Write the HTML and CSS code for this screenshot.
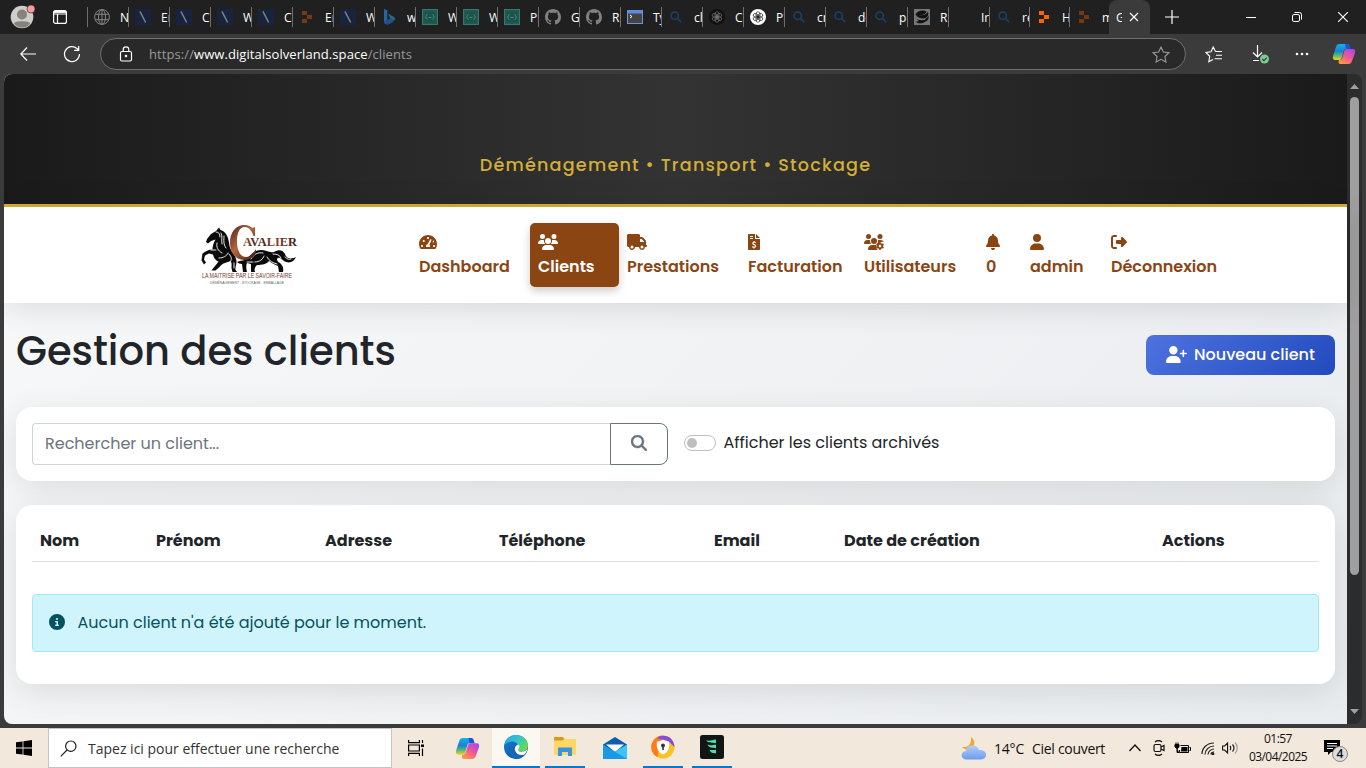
FILE: index.html
```html
<!DOCTYPE html>
<html lang="fr">
<head>
<meta charset="utf-8">
<title>Gestion des clients</title>
<link rel="stylesheet" href="styles.css">
</head>
<body>
<svg class="defs" width="0" height="0">
  <defs>
    <linearGradient id="cpA" x1="0" y1="0" x2="0" y2="1"><stop offset="0" stop-color="#18aef0"/><stop offset=".45" stop-color="#1684d4"/><stop offset=".72" stop-color="#58b878"/><stop offset="1" stop-color="#f5d21c"/></linearGradient>
    <linearGradient id="cpB" x1=".8" y1="0" x2=".2" y2="1"><stop offset="0" stop-color="#a848ef"/><stop offset=".5" stop-color="#ef5795"/><stop offset="1" stop-color="#ff9a48"/></linearGradient>
    <linearGradient id="edA" x1="0" y1="0" x2="1" y2=".5"><stop offset="0" stop-color="#25a7e2"/><stop offset=".55" stop-color="#30c5cf"/><stop offset="1" stop-color="#62d957"/></linearGradient>
    <linearGradient id="edB" x1="0" y1="0" x2="1" y2="1"><stop offset="0" stop-color="#1681d8"/><stop offset="1" stop-color="#0b4c94"/></linearGradient>
    <linearGradient id="cloudG" x1="0" y1="0" x2="0" y2="1"><stop offset="0" stop-color="#b5d0fc"/><stop offset="1" stop-color="#6c9bec"/></linearGradient>
    <linearGradient id="copper" x1="0" y1="0" x2="1" y2="1"><stop offset="0" stop-color="#4b2218"/><stop offset=".45" stop-color="#b4663f"/><stop offset="1" stop-color="#3b1a14"/></linearGradient>
    <linearGradient id="letters" x1="0" y1="0" x2="1" y2="0"><stop offset="0" stop-color="#9a5236"/><stop offset=".3" stop-color="#33150f"/><stop offset=".55" stop-color="#8d4a32"/><stop offset="1" stop-color="#33150f"/></linearGradient>
  </defs>
  <symbol id="t-slash" viewBox="0 0 16 16"><rect width="16" height="16" fill="#18233e"/><path d="M5.200 2.800 10.400 13" stroke="#7d7f83" stroke-width="1.500" stroke-linecap="round"/></symbol>
  <symbol id="t-globe" viewBox="0 0 16 16"><g fill="none" stroke="#858585" stroke-width="1"><circle cx="8" cy="8" r="7.400"/><ellipse cx="8" cy="8" rx="3.500" ry="7.400"/><path d="M1.400 5.300h13.200M1.400 10.700h13.200M8 .6v14.800"/></g></symbol>
  <symbol id="t-hub" viewBox="0 0 16 16"><path d="M3 2h5v4H3zM8 6h5v4H8zM3 10h5v4H3z" fill="currentColor"/></symbol>
  <symbol id="t-bing" viewBox="0 0 16 16"><path d="M3 0l3.300 1.300v9.400L3 13.200z" fill="#2863a8"/><path d="M3 12.800 10 9l3.500 1.700-2 2.900L6.300 16 3 14z" fill="#244f8b"/><path d="M7 4.500 13 8c1 .7 1.300 2 .5 3.600L9.200 9.300z" fill="#226e83"/></symbol>
  <symbol id="t-code" viewBox="0 0 16 16"><rect x=".5" y=".5" width="15" height="15" fill="#1f5d54" stroke="#38766d"/><rect x="2.500" y="2.500" width="11" height="11" fill="#1c534b"/><path d="M5.500 5.500c-1.500 0-.5 2-2 2.500 1.500.5.5 2.500 2 2.500M10.500 5.500c1.500 0 .5 2 2 2.500-1.500.5-.5 2.500-2 2.500M6.500 8.500h3" fill="none" stroke="#5d9187" stroke-width=".9"/></symbol>
  <symbol id="t-git" viewBox="0 0 16 16"><path fill="#808080" d="M8 0C3.580 0 0 3.580 0 8c0 3.540 2.290 6.530 5.470 7.590.4.070.55-.17.55-.38 0-.19-.01-.82-.01-1.490-2.010.37-2.530-.49-2.690-.94-.09-.23-.48-.94-.82-1.130-.28-.15-.68-.52-.01-.53.63-.01 1.080.58 1.230.82.72 1.210 1.870.87 2.330.66.070-.52.28-.87.51-1.070-1.780-.2-3.640-.89-3.640-3.950 0-.87.31-1.590.82-2.150-.08-.2-.36-1.020.08-2.120 0 0 .67-.21 2.200.82.64-.18 1.320-.27 2-.27s1.360.09 2 .27c1.530-1.040 2.200-.82 2.200-.82.44 1.100.16 1.920.08 2.120.51.56.82 1.270.82 2.150 0 3.070-1.870 3.750-3.650 3.950.29.25.54.73.54 1.480 0 1.070-.01 1.930-.01 2.200 0 .21.15.46.55.38A8.010 8.010 0 0 0 16 8c0-4.420-3.580-8-8-8z"/></symbol>
  <symbol id="t-term" viewBox="0 0 16 16"><rect x=".5" y="1.500" width="15" height="13" fill="#444" stroke="#6e94d2"/><path d="M.5 1.500h15v3H.5z" fill="#5d8be0"/><path d="m3 6 2 1.500L3 9" fill="none" stroke="#fff"/></symbol>
  <symbol id="t-find" viewBox="0 0 16 16"><circle cx="6.700" cy="6.700" r="3.700" fill="none" stroke="#17446b" stroke-width="1.500"/><path d="m9.500 9.500 3.600 3.600" stroke="#17446b" stroke-width="1.600"/></symbol>
  <symbol id="knot" viewBox="0 0 16 16"><g fill="none" stroke="currentColor" stroke-width=".7"><ellipse cx="8" cy="5.600" rx="2" ry="2.900"/><ellipse cx="8" cy="5.600" rx="2" ry="2.900" transform="rotate(60 8 8)"/><ellipse cx="8" cy="5.600" rx="2" ry="2.900" transform="rotate(120 8 8)"/><ellipse cx="8" cy="5.600" rx="2" ry="2.900" transform="rotate(180 8 8)"/><ellipse cx="8" cy="5.600" rx="2" ry="2.900" transform="rotate(240 8 8)"/><ellipse cx="8" cy="5.600" rx="2" ry="2.900" transform="rotate(300 8 8)"/></g></symbol>
  <symbol id="t-gptd" viewBox="0 0 16 16"><circle cx="8" cy="8" r="8" fill="#111"/><use href="#knot" color="#777"/></symbol>
  <symbol id="t-gpt" viewBox="0 0 16 16"><circle cx="8" cy="8" r="8" fill="#fff"/><use href="#knot" color="#222"/></symbol>
  <symbol id="t-bird" viewBox="0 0 16 16"><rect width="16" height="16" fill="#777"/><path d="M2 4.500C5 .5 10 1 12.500 2.500 12 5 9 6.500 5.500 6c3 1 6.500-.5 8.500-3 1 3-.5 6-4.500 6.500C6 9.500 3 8 1.500 5.500zM1 8.500c2 2.500 6 3.500 12 2-2 3.500-6 4.500-9.500 3.500L2 12.500l3-.3zM11 10c2-1 3-2 3.500-3.500.5 3-.5 5-2.500 6z" fill="#111"/></symbol>
  <symbol id="copilot" viewBox="0 0 24 24"><path d="M7.500 2h8c1.700 0 2 1.500 1.500 3L14 7c-1.500 0-2 1-2.500 3l-1.800 6c-.5 1.500-1.400 2-3 2H3C1 18 .5 16 1 14L4 5c.6-2 1.500-3 3.500-3z" fill="url(#cpA)"/><path d="M13 2h2.500C18 2 18 5 19 7h-5z" fill="#1a55d8"/><path d="M16.500 22h-8C7 22 6 21 7 18c2.500 0 3-1 3.500-3l1.800-6C12.800 7.500 14 7 15 7h6c2 0 2.500 2 2 4l-3 8c-.6 2-1.500 3-3.500 3z" fill="url(#cpB)"/></symbol>
</svg>

<div class="window">
  <div class="tabstrip">
    <svg class="avatar" width="26" height="26" viewBox="0 0 26 26"><circle cx="12" cy="13" r="11.300" fill="#d0cec9"/><circle cx="12" cy="10.500" r="5" fill="#86827e"/><path d="M4 19.500c0-3 16-3 16 0-3 5.500-13 5.500-16 0z" fill="#86827e"/><circle cx="21" cy="5" r="4" fill="#ff9c99" stroke="#202020" stroke-width=".6"/></svg>
    <svg class="workspace" width="16" height="16" viewBox="0 0 16 16" fill="none" stroke="#fff" stroke-width="1.200"><rect x="1.600" y="1.600" width="12.800" height="12.800" rx="2"/><path d="M1.600 3h12.800M1.600 5h12.800M5.500 5v9"/><path d="M2 2.800h12" stroke-width="2"/></svg>
    <div class="tabs">
      <div class="tab"><svg><use href="#t-globe"/></svg><span>N</span></div>
      <div class="tab"><svg><use href="#t-slash"/></svg><span>En</span></div>
      <div class="tab"><svg><use href="#t-slash"/></svg><span>C</span></div>
      <div class="tab"><svg><use href="#t-slash"/></svg><span>W</span></div>
      <div class="tab"><svg><use href="#t-slash"/></svg><span>C</span></div>
      <div class="tab dim"><svg><use href="#t-hub"/></svg><span>En</span></div>
      <div class="tab"><svg><use href="#t-slash"/></svg><span>W</span></div>
      <div class="tab"><svg><use href="#t-bing"/></svg><span>w</span></div>
      <div class="tab"><svg><use href="#t-code"/></svg><span>W</span></div>
      <div class="tab"><svg><use href="#t-code"/></svg><span>W</span></div>
      <div class="tab"><svg><use href="#t-code"/></svg><span>Pl</span></div>
      <div class="tab"><svg><use href="#t-git"/></svg><span>G</span></div>
      <div class="tab"><svg><use href="#t-git"/></svg><span>R</span></div>
      <div class="tab"><svg><use href="#t-term"/></svg><span>Ty</span></div>
      <div class="tab"><svg><use href="#t-find"/></svg><span>cl</span></div>
      <div class="tab"><svg><use href="#t-gptd"/></svg><span>C</span></div>
      <div class="tab"><svg><use href="#t-gpt"/></svg><span>Pl</span></div>
      <div class="tab"><svg><use href="#t-find"/></svg><span>cr</span></div>
      <div class="tab"><svg><use href="#t-find"/></svg><span>de</span></div>
      <div class="tab"><svg><use href="#t-find"/></svg><span>p</span></div>
      <div class="tab"><svg><use href="#t-bird"/></svg><span>R</span></div>
      <div class="tab"><svg></svg><span>Ir</span></div>
      <div class="tab"><svg><use href="#t-find"/></svg><span>re</span></div>
      <div class="tab hot"><svg><use href="#t-hub"/></svg><span>H</span></div>
      <div class="tab dim"><svg><use href="#t-hub"/></svg><span>m</span></div>
    </div>
    <div class="tab-active"><span>G</span><svg width="10" height="10" viewBox="0 0 10 10"><path d="m1 1 8 8M9 1 1 9" stroke="#fff" stroke-width="1.200"/></svg></div>
    <svg class="newtab" width="14" height="14" viewBox="0 0 14 14"><path d="M7 0v14M0 7h14" stroke="#fff" stroke-width="1.200"/></svg>
    <div class="winbtns">
      <svg width="10" height="10" viewBox="0 0 10 10"><path d="M0 5.500h10" stroke="#fff"/></svg>
      <svg width="10" height="10" viewBox="0 0 10 10" fill="none" stroke="#fff"><rect x=".5" y="2.500" width="7" height="7" rx="1.500"/><path d="M2.500.5h5a2 2 0 0 1 2 2v5"/></svg>
      <svg width="10" height="10" viewBox="0 0 10 10"><path d="m0 0 10 10M10 0 0 10" stroke="#fff" stroke-width="1.100"/></svg>
    </div>
  </div>

  <div class="toolbar">
    <svg class="back" width="16" height="14" viewBox="0 0 16 14" fill="none" stroke="#fff" stroke-width="1.200"><path d="M16 7H1M7 .5.8 7 7 13.500"/></svg>
    <svg class="reload" width="18" height="18" viewBox="0 0 18 18" fill="none" stroke="#fff" stroke-width="1.200"><path d="M16.500 9A7.500 7.500 0 1 1 14 3.500L15.500 5M15.700 1v4.300h-4.500"/></svg>
    <div class="address">
      <svg width="14" height="16" viewBox="0 0 14 16" fill="none" stroke="#fff" stroke-width="1.200"><rect x="1.500" y="5.500" width="11" height="9.500" rx="1.500"/><path d="M4.200 5.500V3.700a2.800 2.800 0 0 1 5.600 0v1.800"/><circle cx="7" cy="10" r=".7" fill="#fff"/></svg>
      <span class="url">https://<b>www.digitalsolverland.space</b>/clients</span>
      <svg class="star" width="18" height="17" viewBox="0 0 18 17" fill="none" stroke="#999" stroke-width="1.100"><path d="m9 1 2.400 5 5.500.7-4 3.800 1 5.500L9 13.300 4.100 16l1-5.500-4-3.800L6.600 6z"/></svg>
    </div>
    <svg class="favs" width="18" height="17" viewBox="0 0 18 17" fill="none" stroke="#fff" stroke-width="1.100"><path d="M10.500 5.500 8.200 1 6 5.800l-5 .7 3.700 3.800-.9 5.500L8 13.600M10.500 5.500H17M11 9.200h6M9.500 12.800H17"/></svg>
    <svg class="down" width="20" height="20" viewBox="0 0 20 20" fill="none" stroke="#fff" stroke-width="1.200"><path d="M6.500 1v12M2 8.500 6.500 13 11 8.500M2 16.500h6"/><circle cx="13.500" cy="15" r="4.500" fill="#7ccb93" stroke="none"/><path d="m11.300 15 1.600 1.600 3-3" stroke="#27472f"/></svg>
    <svg class="dots" width="14" height="4" viewBox="0 0 14 4" fill="#fff"><circle cx="2" cy="2" r="1.300"/><circle cx="7" cy="2" r="1.300"/><circle cx="12" cy="2" r="1.300"/></svg>
    <svg class="cop" width="24" height="24"><use href="#copilot"/></svg>
  </div>

  <div class="viewport">
    <div class="page">
      <header class="hero"><p class="slogan">Déménagement • Transport • Stockage</p></header>
      <nav class="navbar">
        <svg class="brand" width="100" height="64" viewBox="0 0 100 64">
          <g fill="#0b0a0a">
            <path d="M18 4.500 19.500 7c4 1 7 5 8 10 .8 4 1 8 3 11 3 4 5 7 5 11 0 3-1.500 5-1 8l1.500 2h-4.500l-1-4c0-3 .5-5-1-7-5 2-8 2-11 6l-4 3.500h-4c2-3 5-6 7-9-3-1-5-4-5.500-7l-4-1-4 2-1 4 2 3-2 2-2.500-4 1-7c3-2 6-4 10-4 0-3 1-7 3-10l-4.500 1.500-3 2.500-2-1.500 1-3 4-5 5-3z"/>
            <path d="M36 39c4-2 7-1 10-3 4-5 8-9 14-9 5 0 8 3 13 2 5-3 9-2 11 2 1 4 5 6 11 3-2 5-7 7-12 4-3-2-4-4-6-3s-1 3 2 5c2 2 4 4 3 9h-4l-1-6c-4-2-7-3-9-5-2 3-7 4-12 4-2 2-3 4-2 7h-4v-8l-4-1c-1 2-1 5 0 9h-4l-1-8c-2 0-4-1-5-2z"/>
          </g>
          <g fill="none" stroke="#fff" stroke-width=".9" stroke-linecap="round"><path d="M15 9c3 0 4 2 4 5M20 10c2 3 0 7 1 11M23 13c0 4-1 8 2 12M16 20c-1 4 1 8 5 10M18 35c4 0 8-2 9-5M28 31c3 3 3 6 1 8M10 27h5M33 40v5M50 36c3-5 7-7 12-6M54 39c5 0 8-3 9-6M66 34c2 4 6 6 10 7M72 31c4 0 7 1 8 4M84 34c2 2 4 3 6 2M46 39h6"/></g>
          <path d="M54 4v9h-1.500C51 8 48 4 44 4c-6 0-8 7-8 14 0 9 3 16 9 16 4 0 7-3 10-8v4c-2 4-6 7-12 7-8 0-14-7-14-17C29 9 35 2 43.500 2c4 0 6 1.500 8 3z" fill="url(#copper)"/>
          <text class="brand-name" x="42" y="22.500" textLength="54" lengthAdjust="spacingAndGlyphs">AVALIER</text>
          <text class="brand-tag" x="1" y="54.500" textLength="90" lengthAdjust="spacingAndGlyphs">LA MAITRISE PAR LE SAVOIR-FAIRE</text>
          <text class="brand-sub" x="9" y="61" textLength="74" lengthAdjust="spacingAndGlyphs">DÉMÉNAGEMENT . STOCKAGE . EMBALLAGE</text>
        </svg>
        <div class="menu">
          <a class="item"><svg width="18" height="16" viewBox="0 0 576 512"><path fill="currentColor" fill-rule="evenodd" d="M288 32C129 32 0 161 0 320c0 53 14 102 39 145 6 9 16 15 27 15h444c11 0 21-6 27-15 25-43 39-92 39-145C576 161 447 32 288 32zM288 96a34 34 0 1 1 0 68 34 34 0 1 1 0-68zM96 350a34 34 0 1 1 0 68 34 34 0 1 1 0-68zM152 190a34 34 0 1 1 0 68 34 34 0 1 1 0-68zM480 350a34 34 0 1 1 0 68 34 34 0 1 1 0-68zM352 416H224c-5-36 11-75 54-94l76-142c16-26 54-6 42 22l-62 136c18 22 25 50 18 78zM447 205a32 32 0 1 1-15 60l18-42z"/></svg><span>Dashboard</span></a>
          <a class="item active"><svg width="20" height="16" viewBox="0 0 640 512"><path fill="currentColor" d="M144 0a80 80 0 1 1 0 160A80 80 0 1 1 144 0zM512 0a80 80 0 1 1 0 160A80 80 0 1 1 512 0zM0 298.700C0 239.800 47.800 192 106.700 192h42.700c15.900 0 31 3.500 44.600 9.700c-1.300 7.200-1.900 14.700-1.900 22.300c0 38.200 16.800 72.500 43.300 96H21.300C9.600 320 0 310.400 0 298.700zM405.300 320c26.600-23.500 43.300-57.800 43.300-96c0-7.600-.7-15-1.900-22.300c13.600-6.300 28.700-9.700 44.600-9.700h42.700C592.200 192 640 239.800 640 298.700c0 11.800-9.600 21.300-21.300 21.300zM224 224a96 96 0 1 1 192 0 96 96 0 1 1-192 0zM128 485.300C128 411.700 187.700 352 261.300 352H378.700C452.300 352 512 411.700 512 485.300c0 14.700-11.900 26.700-26.700 26.700H154.700c-14.700 0-26.700-11.900-26.700-26.700z"/></svg><span>Clients</span></a>
          <a class="item"><svg width="20" height="16" viewBox="0 0 640 512"><path fill="currentColor" d="M48 0C21.500 0 0 21.500 0 48V368c0 26.500 21.500 48 48 48H64c0 53 43 96 96 96s96-43 96-96H384c0 53 43 96 96 96s96-43 96-96h32c17.700 0 32-14.300 32-32s-14.300-32-32-32V237.300c0-17-6.700-33.300-18.700-45.300L512 114.700c-12-12-28.300-18.700-45.300-18.700H416V48c0-26.500-21.500-48-48-48H48zM416 160h50.700L544 237.300V256H416V160zM112 416a48 48 0 1 1 96 0 48 48 0 1 1-96 0zm368-48a48 48 0 1 1 0 96 48 48 0 1 1 0-96z"/></svg><span>Prestations</span></a>
          <a class="item"><svg width="12" height="16" viewBox="0 0 384 512"><path fill="currentColor" fill-rule="evenodd" d="M32 0C14 0 0 14 0 32v448c0 18 14 32 32 32h320c18 0 32-14 32-32V160H256c-18 0-32-14-32-32V0zM256 0v128h128zM64 64h96v32H64zM64 128h96v32H64zM176 224h32v25c18 1 34 5 48 10l-9 31c-25-8-72-16-72 8 0 36 88 16 88 82 0 30-20 50-55 57v27h-32v-27c-20-3-37-9-52-16l12-31c24 11 91 26 92-7 1-39-89-19-89-83 0-28 18-46 37-50z"/></svg><span>Facturation</span></a>
          <a class="item"><svg width="20" height="16" viewBox="0 0 640 512" fill="currentColor"><circle cx="144" cy="80" r="80"/><circle cx="512" cy="80" r="80"/><path d="M0 299c0-59 48-107 107-107h42c16 0 31 4 45 10-8 45 7 88 41 118H21c-12 0-21-10-21-21zM405 320c38-28 52-76 41-118 14-6 29-10 45-10h43c44 0 82 27 98 65-26-13-54-18-70 2-39-12-68 8-82 61z"/><circle cx="320" cy="224" r="96"/><path d="M128 485c0-73 60-133 133-133h131c-7 30 3 44 16 56-17 37 0 70 31 104H155c-15 0-27-12-27-27z"/><path fill-rule="evenodd" d="m480 268 20-8h24l20 8 9 32 26 14 32-8 24 38-22 28v28l22 28-24 38-32-8-26 14-9 32h-64l-9-32-26-14-32 8-24-38 22-28v-28l-22-28 24-38 32 8 26-14zM512 344a42 42 0 1 0 0 84 42 42 0 1 0 0-84z"/></svg><span>Utilisateurs</span></a>
          <a class="item"><svg width="14" height="16" viewBox="0 0 448 512"><path fill="currentColor" d="M224 0c-17.700 0-32 14.300-32 32V51.200C119 66 64 130.600 64 208v18.800c0 47-17.300 92.400-48.500 127.600l-7.400 8.300c-8.400 9.400-10.400 22.900-5.300 34.400S19.400 416 32 416H416c12.600 0 24-7.400 29.200-18.900s3.100-25-5.300-34.400l-7.400-8.300C401.300 319.200 384 273.900 384 226.800V208c0-77.400-55-142-128-156.800V32c0-17.700-14.300-32-32-32zm45.300 493.300c12-12 18.700-28.300 18.700-45.300H160c0 17 6.700 33.300 18.700 45.300s28.300 18.700 45.300 18.700s33.300-6.700 45.300-18.700z"/></svg><span>0</span></a>
          <a class="item"><svg width="14" height="16" viewBox="0 0 448 512"><path fill="currentColor" d="M224 256A128 128 0 1 0 224 0a128 128 0 1 0 0 256zm-45.700 48C79.800 304 0 383.800 0 482.300C0 498.700 13.300 512 29.700 512H418.300c16.400 0 29.700-13.300 29.700-29.700C448 383.800 368.200 304 269.700 304H178.300z"/></svg><span>admin</span></a>
          <a class="item"><svg width="16" height="16" viewBox="0 0 512 512"><path fill="currentColor" d="M377.900 105.900L500.700 228.700c7.200 7.200 11.300 17.100 11.300 27.300s-4.100 20.100-11.300 27.300L377.900 406.100c-6.400 6.400-15 9.900-24 9.900c-18.700 0-33.900-15.200-33.900-33.900V320H192c-17.700 0-32-14.300-32-32v-64c0-17.700 14.300-32 32-32h128v-62.100c0-18.700 15.200-33.900 33.900-33.900c9 0 17.600 3.600 24 9.900zM160 96H96c-17.700 0-32 14.300-32 32v256c0 17.700 14.300 32 32 32h64c17.700 0 32 14.300 32 32s-14.300 32-32 32H96c-53 0-96-43-96-96V128C0 75 43 32 96 32h64c17.700 0 32 14.300 32 32s-14.300 32-32 32z"/></svg><span>Déconnexion</span></a>
        </div>
      </nav>

      <main class="content">
        <div class="heading">
          <h1>Gestion des clients</h1>
          <button class="primary"><svg width="21" height="17" viewBox="0 0 640 512"><path fill="currentColor" d="M96 128a128 128 0 1 1 256 0A128 128 0 1 1 96 128zM0 482.300C0 383.800 79.800 304 178.300 304h91.400C368.200 304 448 383.800 448 482.300c0 16.400-13.300 29.700-29.700 29.700H29.700C13.300 512 0 498.700 0 482.300zM504 312V248H440c-13.300 0-24-10.700-24-24s10.700-24 24-24h64V136c0-13.300 10.700-24 24-24s24 10.700 24 24v64h64c13.300 0 24 10.700 24 24s-10.700 24-24 24H552v64c0 13.300-10.700 24-24 24s-24-10.700-24-24z"/></svg><span>Nouveau client</span></button>
        </div>
        <section class="card search">
          <div class="field">Rechercher un client...</div>
          <div class="go"><svg width="16" height="16" viewBox="0 0 512 512"><path fill="currentColor" stroke="currentColor" stroke-width="14" d="M416 208c0 45.900-14.900 88.300-40 122.700L502.600 457.400c12.500 12.500 12.500 32.800 0 45.300s-32.800 12.500-45.300 0L330.700 376c-34.400 25.200-76.800 40-122.700 40C93.100 416 0 322.900 0 208S93.100 0 208 0S416 93.100 416 208zM208 352a144 144 0 1 0 0-288 144 144 0 1 0 0 288z"/></svg></div>
          <div class="switch"><i></i></div>
          <span class="switch-label">Afficher les clients archivés</span>
        </section>
        <section class="card list">
          <div class="thead"><span>Nom</span><span>Prénom</span><span>Adresse</span><span>Téléphone</span><span>Email</span><span>Date de création</span><span>Actions</span></div>
          <div class="alert"><svg width="16" height="16" viewBox="0 0 512 512"><path fill="currentColor" d="M256 512A256 256 0 1 0 256 0a256 256 0 1 0 0 512zM216 336h24V272H216c-13.300 0-24-10.700-24-24s10.700-24 24-24h48c13.300 0 24 10.700 24 24v88h8c13.300 0 24 10.700 24 24s-10.700 24-24 24H216c-13.300 0-24-10.700-24-24s10.700-24 24-24zm40-208a32 32 0 1 1 0 64 32 32 0 1 1 0-64z"/></svg><span>Aucun client n'a été ajouté pour le moment.</span></div>
        </section>
      </main>
    </div>
    <div class="scrollbar">
      <svg width="9" height="5" viewBox="0 0 9 5"><path d="M4.500 0 9 5H0z" fill="#9f9f9f"/></svg>
      <div class="thumb"></div>
      <svg class="dn" width="9" height="5" viewBox="0 0 9 5"><path d="M4.500 5 9 0H0z" fill="#9f9f9f"/></svg>
    </div>
  </div>
</div>

<div class="taskbar">
  <svg class="start" width="16" height="16" viewBox="0 0 16 16"><path d="M0 2.300 6.600 1.400v6.200H0zM7.400 1.300 16 0v7.600H7.400zM0 8.400h6.600v6.200L0 13.700zM7.400 8.400H16V16l-8.600-1.300z"/></svg>
  <div class="tb-search"><svg width="17" height="17" viewBox="0 0 17 17" fill="none" stroke="#222" stroke-width="1.200"><circle cx="10.800" cy="6.200" r="5.200"/><path d="M7 10 .8 16.300"/></svg><span>Tapez ici pour effectuer une recherche</span></div>
  <div class="apps">
    <div class="app tv"><svg width="17" height="16" viewBox="0 0 17 16" fill="none" stroke="#000" stroke-width="1.200"><path d="M.6 0v2.600h10.800V0M.6 16v-2.600h10.800V16M.6 5h10.800v6H.6zM14.500 0v3M14.500 8.500V16"/><path d="M13 4.500h3v2.500h-3z" fill="#000" stroke="none"/></svg></div>
    <div class="app"><svg width="25" height="25"><use href="#copilot"/></svg></div>
    <div class="app current"><svg width="24" height="24" viewBox="0 0 24 24"><circle cx="12" cy="12" r="12" fill="url(#edB)"/><path d="M.5 10C1.500 4 6 0 12 0c7 0 12 5 12 10.500 0 4-3 6-6.500 6-3 0-4.500-1-3.500-2.500C16 10 12 6 7.500 6.500 4 7 1.500 8.500.5 10z" fill="url(#edA)"/><path d="M9.500 9.500c-3 5 2 12.500 11 9.500-2 3.500-5 5-8.500 5C5 23 4 12.500 9.500 9.500z" fill="#1769b5"/><path d="M14.500 9.500c1.500 1.500 1 3-.2 4.500-.8 2 1.700 3 4.700 2.500 2-.3 3.500-1.300 4.500-2.500-.5 2-1.500 4-3 5.500-4 1.500-8 0-9.500-4-.7-3 1-5.500 3.500-6z" fill="#fbf7f1"/></svg></div>
    <div class="app open"><svg width="22" height="20" viewBox="0 0 22 20"><path d="M0 0h9l2 2h11v16H0z" fill="#ffd765"/><path d="M0 0h9l1 2-1 1.500H0z" fill="#d99b13"/><path d="M4 19v-8.500h14V19h-4v-4H8v4z" fill="#3795dc"/></svg></div>
    <div class="app"><svg width="24" height="24" viewBox="0 0 24 24"><path d="M12 1 24 8.500V23H0V8.500z" fill="#0e5cab"/><path d="M3 8.500h18L12 16z" fill="#fff"/><path d="M0 8.500 12 15.700 24 8.500V23H0z" fill="#1a9ae6"/><path d="M24 8.500 12 15.700 24 23z" fill="#3cc4f4"/></svg></div>
    <div class="app open"><svg width="24" height="24" viewBox="0 0 24 24"><circle cx="12" cy="12" r="11.500" fill="#f9c227"/><path d="M12 .5A11.500 11.500 0 0 0 6 22C9 20 5 10 12 6z" fill="#ff7d18"/><path d="M6 3C12-2 23 1 23.500 12 20 9 18 5 12 5z" fill="#834ce5"/><path d="M12 4.500c2 1.500 4 2 6 2 1 6-1 11-6 13-5-2-7-7-6-13 2 0 4-.5 6-2z" fill="#fff"/><circle cx="12" cy="10.500" r="2" fill="#343150"/><path d="M11.200 11h1.600v4h-1.600z" fill="#343150"/></svg></div>
    <div class="app open"><svg width="24" height="24" viewBox="0 0 24 24"><rect width="24" height="24" rx="2.500" fill="#111615"/><path d="M6 5c3 1.500 6 0 10-.5v3.700C12 7.500 8 8.500 6 5zM7.500 9.500c3 1.500 5 .3 8.500.3v3.400c-3-.5-7 0-8.500-3.700zM9.500 14.500c2 1 4 .2 6.500.2V18.500c-3-.5-5.500-.5-6.500-4z" fill="#50deb1"/></svg></div>
  </div>
  <div class="tray">
    <svg class="weather" width="26" height="25" viewBox="0 0 26 25"><path d="M10 1c6 4 3 12-2 13-3 0-5-1-7-3 6 1 10-3 9-10z" fill="#f3a52d"/><path d="M6 23.500c-7 0-7-8-1-8.500 1-7 11-8 13-1 9-1 9 9.500 2 9.500z" fill="url(#cloudG)"/></svg>
    <span class="temp">14°C</span><span class="sky">Ciel couvert</span>
    <svg class="chev" width="12" height="8" viewBox="0 0 12 8" fill="none" stroke="#111" stroke-width="1.300"><path d="m.5 7 5.500-6 5.500 6"/></svg>
    <svg class="meet" width="12" height="16" viewBox="0 0 12 16" fill="none" stroke="#111" stroke-width="1.200"><rect x="1" y="4.500" width="7" height="7" rx="1.500"/><path d="m8 7 3-1.500v5L8 9M2 2c2-1.700 5-1.700 7 0M2 14c2 1.700 5 1.700 7 0"/></svg>
    <svg class="batt" width="17" height="13" viewBox="0 0 17 13" fill="none" stroke="#000"><path d="M6.500 3.500h8v7h-9V8M15.500 5.500h1v3h-1"/><path d="M7.500 5h6v4.500H7z" fill="#000" stroke="none"/><path d="M1 2.500h4V5L3 6.500 1 5zM2 .5v2M4 .5v2M3 6v4.500h2" fill="#000"/></svg>
    <svg class="wifi" width="14" height="13" viewBox="0 0 14 13" fill="none" stroke="#222" stroke-width="1.200"><path d="M1 12C1 6 6 1 13 1M4 12.500C4 8 8 4 13 4M7 12.500c0-3 3-5.500 6-5.500M10 12.500c0-1.500 1-2.500 3-2.500"/><circle cx="12" cy="12" r=".8" fill="#000"/></svg>
    <svg class="vol" width="17" height="14" viewBox="0 0 17 14" fill="none" stroke="#111" stroke-width="1.100"><path d="M.6 5h2l3-3v10l-3-3h-2zM8 5c1 1 1 3 0 4M10.500 3.500c2 2 2 5 0 7"/><path d="M13 1.500c3 3 3 8 0 11" stroke="#999"/></svg>
    <div class="clock"><span>01:57</span><span>03/04/2025</span></div>
    <div class="notif"><svg width="16" height="16" viewBox="0 0 16 16"><path d="M0 0h16v12H7l-3 3v-3H0z" fill="#000"/><path d="M3 3.500h10M3 6h10M3 8.500h6" stroke="#fff"/></svg><b>4</b></div>
  </div>
</div>
</body>
</html>
```
FILE: styles.css
```css
* { box-sizing: border-box; }
body { margin: 0; width: 1366px; height: 768px; overflow: hidden; background: #3b3b3b; font-family: "Segoe UI", "Open Sans", "Noto Sans", sans-serif; }
svg { display: block; flex: none; }
.defs { position: absolute; }

.window { height: 728px; background: #3b3b3b; }
.tabstrip { height: 34px; background: #202020; display: flex; align-items: center; color: #fff; font-size: 12px; }
.avatar { margin-left: 10px; }
.workspace { margin-left: 16px; }
.tabs { display: flex; width: 1022px; margin-left: 19px; flex: none; }
.tab { width: 41px; height: 20px; flex: none; border-left: 1px solid #707070; display: flex; align-items: center; overflow: hidden; white-space: nowrap; }
.tab svg { width: 16px; height: 16px; margin: 0 10px 0 6px; }
.tab:nth-child(23), .tab:nth-child(24) { width: 40px; }
.tab:last-child { width: 40px; }
.dim { color: #763a13; }
.dim span, .hot span { color: #fff; }
.hot { color: #ff6200; }
.tab-active { width: 41px; height: 34px; background: #3b3b3b; border-radius: 8px 8px 0 0; display: flex; align-items: center; padding-left: 7px; }
.tab-active span { width: 6px; overflow: hidden; margin-right: 7px; }
.newtab { margin-left: 15px; }
.winbtns { display: flex; gap: 36px; margin-left: 67px; }

.toolbar { height: 40px; display: flex; align-items: center; }
.back { margin-left: 20px; }
.reload { margin-left: 27px; }
.address { width: 1086px; height: 32px; margin-left: 19px; border: 1px solid #707070; border-radius: 16px; background: #292929; display: flex; align-items: center; padding: 0 15px 0 18px; }
.url { margin-left: 16px; flex: 1; font-size: 13px; color: #999; letter-spacing: .08px; }
.url b { color: #fff; font-weight: 400; }
.favs { margin-left: 19px; }
.down { margin-left: 28px; }
.dots { margin-left: 24px; }
.cop { margin-left: 23px; }

.viewport { height: 650px; margin: 0 4px; border-radius: 8px; overflow: hidden; display: flex; }
.page { width: 1343px; flex: none; font-family: "Poppins", "Inter", sans-serif; font-size: 16px; color: #212529; background: linear-gradient(135deg, #f8f9fa, #e9ecef); }
.hero { height: 133px; border-bottom: 3px solid #d4af37; background: linear-gradient(90deg, #1a1a1a, #333 50%, #1a1a1a); display: flex; justify-content: center; align-items: flex-end; }
.slogan { margin: 0 0 26px; font-size: 17.6px; line-height: 26px; font-weight: 500; color: #d4af37; letter-spacing: 1.2px; }
.navbar { height: 96px; background: #fff; display: flex; align-items: center; padding-left: 197px; box-shadow: 0 4px 30px rgba(0,0,0,.12); position: relative; }
.brand-name { font: 700 12.500px "Liberation Serif", serif; fill: url(#letters); }
.brand-tag { font: 6.500px "Liberation Sans", sans-serif; fill: #74382b; }
.brand-sub { font: 4px "Liberation Sans", sans-serif; fill: #666; }
.menu { display: grid; grid-template-columns: 119px 89px 121px 116px 122px 44px 81px 130px; margin-left: 110px; }
.item { height: 64px; padding: 11px 8px 0; color: #8b4513; font-weight: 600; line-height: 24px; white-space: nowrap; display: flex; flex-direction: column; gap: 5px; }
.active { background: #8b4513; color: #fff; border-radius: 5px; box-shadow: 0 4px 8px rgba(0,0,0,.2); }

.content { height: 421px; padding: 0 12px; display: flex; flex-direction: column; }
.heading { height: 104px; display: flex; align-items: flex-start; justify-content: space-between; padding-top: 24px; }
h1 { margin: 0; font-weight: 500; font-size: 40px; line-height: 48px; }
.primary { width: 189px; height: 40px; margin-top: 8px; border: 0; border-radius: 8px; color: #fff; font: 500 16px "Poppins", "Inter", sans-serif; background: linear-gradient(135deg, #4e73df, #224abe); display: flex; align-items: center; gap: 7px; padding: 0 0 2px 20px; white-space: nowrap; }
.card { background: #fff; border-radius: 16px; box-shadow: 0 8px 32px rgba(0,0,0,.1); padding: 16px; }
.search { height: 74px; display: flex; align-items: center; flex: none; }
.field { width: 578px; height: 42px; border: 1px solid #ced4da; border-right: 0; border-radius: 4px 0 0 4px; padding-left: 12px; line-height: 39px; color: #6c757d; }
.go { width: 58px; height: 42px; border: 1px solid #6c757d; border-radius: 0 8px 8px 0; color: #6c757d; display: grid; place-items: center; padding-bottom: 2px; }
.switch { width: 32px; height: 16px; margin: 0 0 2px 16px; border: 1px solid #bfbfbf; border-radius: 8px; padding: 2px; }
.switch i { display: block; width: 10px; height: 10px; border-radius: 50%; background: #bfbfbf; }
.switch-label { margin: 0 0 3px 7.500px; }
.list { height: 179px; margin-top: 24px; flex: none; }
.thead { height: 41px; display: grid; grid-template-columns: 116px 169px 174px 215px 130px 318px 1fr; align-items: center; padding: 0 0 2px 8px; border-bottom: 1px solid #dee2e6; font-weight: 700; white-space: nowrap; }
.alert { height: 58px; margin-top: 32px; border: 1px solid #9eeaf9; border-radius: 4px; background: #cff4fc; color: #055160; display: flex; align-items: center; gap: 12.500px; padding: 0 0 2px 16px; }

.scrollbar { width: 15px; background: #2c2c2c; display: flex; flex-direction: column; align-items: center; padding: 10px 0 10px; }
.thumb { width: 9px; height: 478px; margin-top: 8px; border-radius: 5px; background: #9f9f9f; }
.dn { margin-top: auto; }

.taskbar { height: 40px; background: #f2e8dc; display: flex; align-items: center; color: #111; }
.start { margin-left: 16px; }
.tb-search { width: 344px; height: 40px; margin-left: 16px; background: #fff; border: 1px solid #c4c4c4; display: flex; align-items: center; gap: 11px; padding-left: 11px; font-size: 14px; white-space: nowrap; color: #333; }
.apps { display: flex; }
.app { width: 49px; height: 40px; display: grid; place-items: center; }
.app.tv { width: 51px; padding-right: 3px; }
.current { width: 48px; margin-right: 1px; background: #fbf7f1; }
.current, .open { border-bottom: 2px solid #0078d7; }
.open { width: 40px; margin: 0 5px 0 4px; }
.tray { flex: 1; display: flex; align-items: center; font-size: 14px; white-space: nowrap; }
.weather { margin-left: 224px; }
.temp { width: 31px; margin-left: 7px; letter-spacing: -.2px; }
.sky { width: 74px; margin-left: 7px; letter-spacing: -.3px; }
.chev { margin-left: 23px; }
.meet { margin-left: 12px; }
.batt { margin-left: 9px; }
.wifi { margin-left: 10px; }
.vol { margin-left: 7px; }
.clock { width: 68px; margin-left: 5px; font-size: 12px; line-height: 18px; letter-spacing: -.55px; display: flex; flex-direction: column; align-items: center; }
.notif { margin-left: 12px; position: relative; }
.notif b { position: absolute; left: 8px; top: 6px; width: 16px; height: 16px; border: 1px solid #888; border-radius: 50%; background: #ddd; font-size: 12px; font-weight: 600; line-height: 14px; text-align: center; }
```
